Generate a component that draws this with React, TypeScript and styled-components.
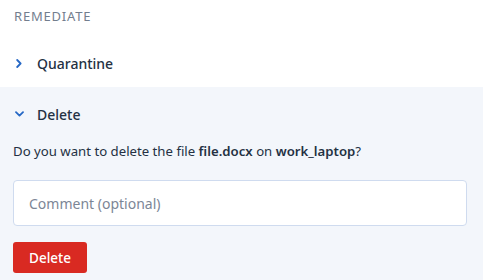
import React from "react";
import styled, { createGlobalStyle } from "styled-components";

const Global = createGlobalStyle`
  body {
    margin: 0;
    background: #ffffff;
    font-family: "Noto Sans", "Open Sans", sans-serif;
    color: #243143;
  }
`;

const Wrap = styled.div`
  width: 483px;
  min-height: 280px;
  display: flex;
  flex-direction: column;
`;

const SectionTitle = styled.div`
  padding: 8px 14px 14px;
  line-height: 17px;
  font-size: 13px;
  font-weight: 400;
  letter-spacing: 0.8px;
  color: #737e8e;
  text-transform: uppercase;
`;

const Item = styled.div<{ open?: boolean }>`
  display: flex;
  flex-direction: column;
  background: ${({ open }) => (open ? "#f3f6fb" : "#ffffff")};
  flex: ${({ open }) => (open ? 1 : "none")};
`;

const Head = styled.div<{ tall?: boolean }>`
  height: ${({ tall }) => (tall ? 54 : 48)}px;
  display: flex;
  align-items: center;
  padding-left: 14px;
  gap: 13px;
  font-size: 14px;
  font-weight: 500;
  color: #243143;
`;

const Chevron = styled.span`
  width: 10px;
  display: flex;
  justify-content: center;
  color: #2668c5;
`;

const Body = styled.div`
  padding: 0 16px 8px 13px;
  display: flex;
  flex-direction: column;
`;

const Question = styled.p`
  margin: 0;
  font-size: 13.2px;
  line-height: 20px;
  color: #243143;
  b {
    font-weight: 600;
  }
`;

const Comment = styled.input`
  margin-top: 19px;
  height: 46px;
  box-sizing: border-box;
  width: 454px;
  border: 1.5px solid #cfdbef;
  border-radius: 4px;
  background: #ffffff;
  padding: 0 15px;
  font-family: inherit;
  font-size: 14px;
  color: #243143;
  outline: none;
  &::placeholder {
    color: #7c8696;
  }
`;

const DangerButton = styled.button`
  margin-top: 16px;
  align-self: flex-start;
  width: 74px;
  height: 31px;
  border: none;
  border-radius: 3px;
  background: #d92a22;
  color: #ffffff;
  font-family: inherit;
  font-size: 13.5px;
  font-weight: 500;
  cursor: pointer;
`;

const Right = () => (
  <svg width="6" height="9" viewBox="0 0 6 9">
    <path d="M1.2 1 L4.6 4.5 L1.2 8" fill="none" stroke="currentColor" strokeWidth="1.8" strokeLinecap="round" strokeLinejoin="round" />
  </svg>
);

const Down = () => (
  <svg width="9" height="6" viewBox="0 0 9 6">
    <path d="M1 1.2 L4.5 4.6 L8 1.2" fill="none" stroke="currentColor" strokeWidth="1.8" strokeLinecap="round" strokeLinejoin="round" />
  </svg>
);

export default function App() {
  return (
    <Wrap>
      <Global />
      <SectionTitle>Remediate</SectionTitle>

      <Item>
        <Head>
          <Chevron>
            <Right />
          </Chevron>
          Quarantine
        </Head>
      </Item>

      <Item open>
        <Head tall>
          <Chevron>
            <Down />
          </Chevron>
          Delete
        </Head>
        <Body>
          <Question>
            Do you want to delete the file <b>file.docx</b> on <b>work_laptop</b>?
          </Question>
          <Comment placeholder="Comment (optional)" />
          <DangerButton>Delete</DangerButton>
        </Body>
      </Item>
    </Wrap>
  );
}
